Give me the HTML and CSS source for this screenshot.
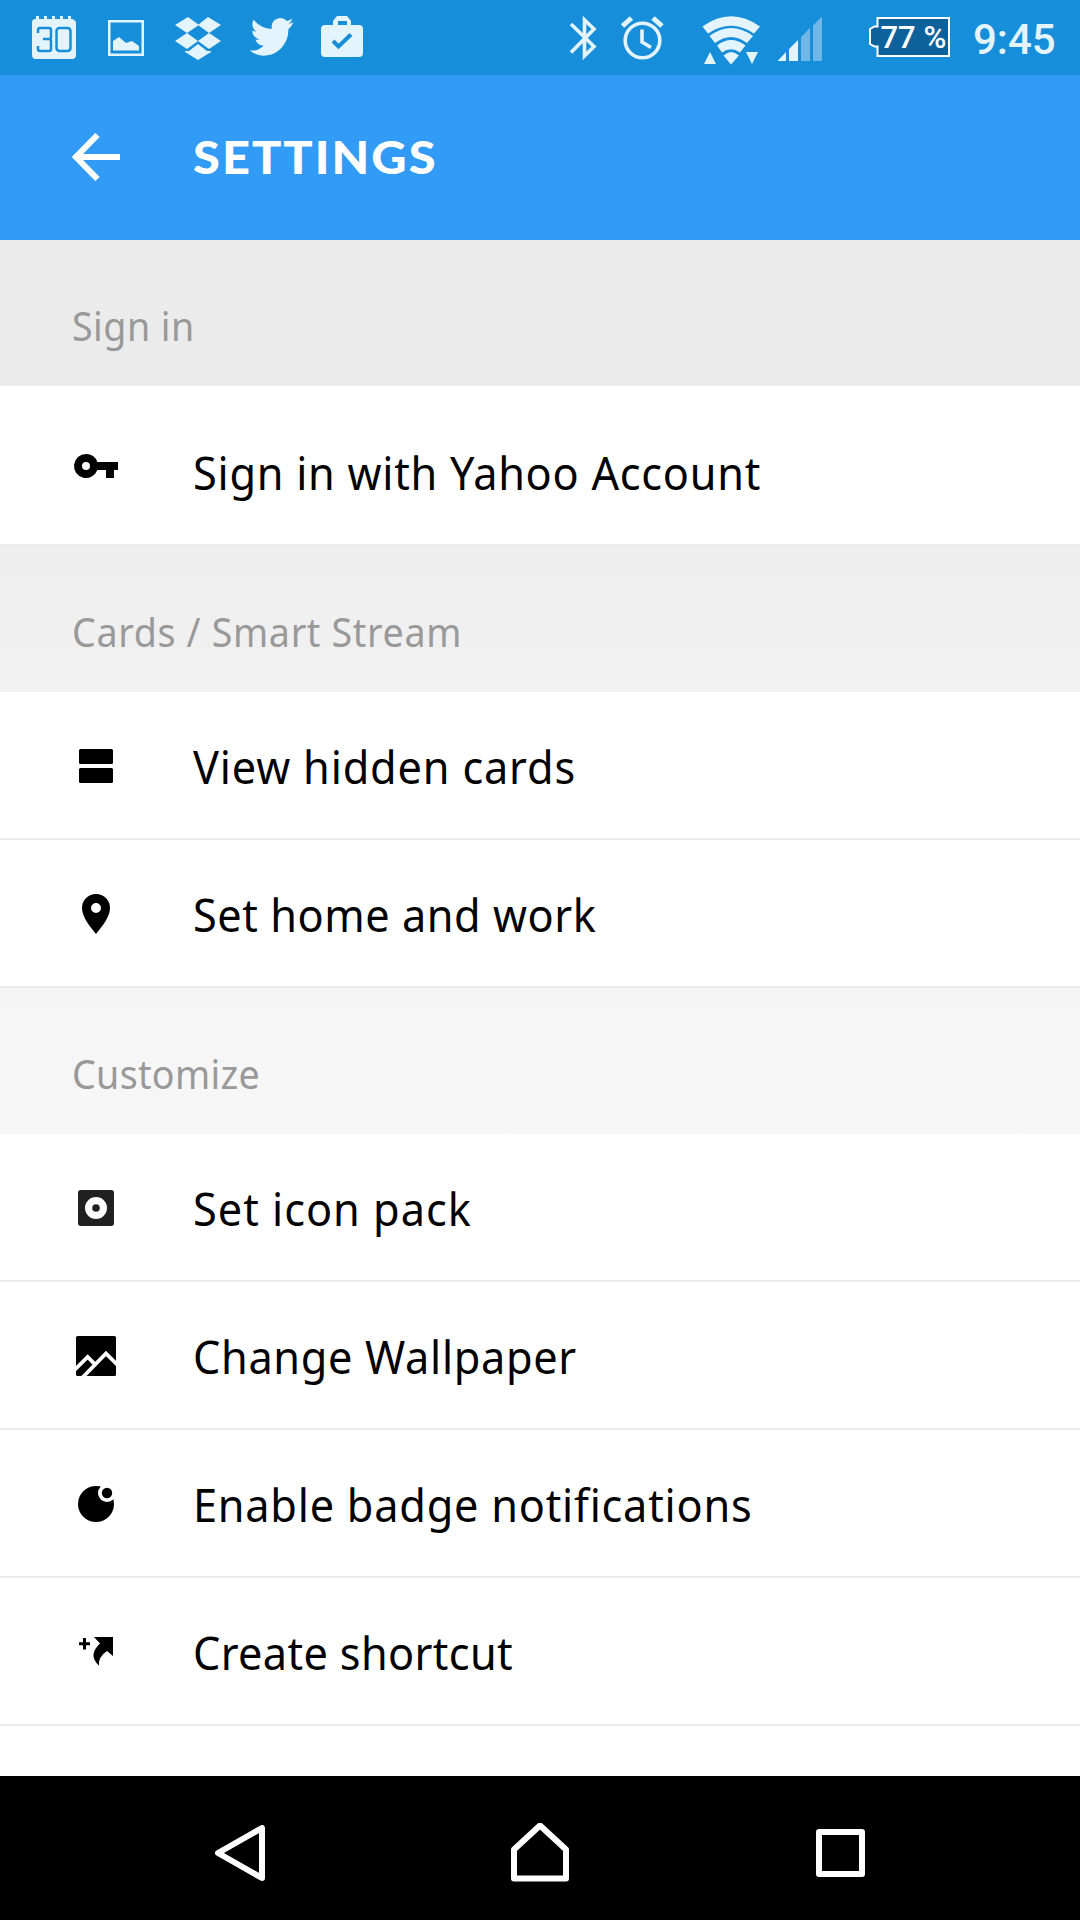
FILE: index.html
```html
<!DOCTYPE html>
<html lang="en">
<head>
<meta charset="utf-8">
<title>Settings</title>
<link rel="stylesheet" href="styles.css">
</head>
<body>
<div class="phone">
  <div class="status">
    <svg class="status-icons" width="400" height="75" viewBox="0 0 400 75">
      <g class="soft">
        <path d="M35 19h1v-3h3v3h5v-3h3v3h5v-3h3v3h5v-3h3v3h5v-3h3v3h1q4 1 4 4v32q0 4-4 4H36q-4 0-4-4V23q0-4 3-4z"/>
        <path d="M108 20h36v36h-36zM110.500 22.500v31h31v-31z" fill-rule="evenodd"/>
        <path d="M113 50.500V41l6-4 7 6 6-2 7 5v4.500z"/>
        <path d="M188 17l11 8-12 8-12-8zM208 17l13 8-12 8-11-8zM187 33l11 8-11 8-12-8zM209 33l12 8-12 8-11-8zM198 44l9 7h4v1l-13 8-13-8v-1h4z"/>
        <path d="M293.500 22.300a17.500 17.500 0 0 1-5 1.400 8.800 8.800 0 0 0 3.900-4.900 17.500 17.500 0 0 1-5.600 2.200 8.800 8.800 0 0 0-15.200 6c0 .7.100 1.400.2 2a25 25 0 0 1-18.200-9.200 9 9 0 0 0 2.700 11.900 8.800 8.800 0 0 1-4-1.100v.1a8.800 8.800 0 0 0 7.100 8.700 8.800 8.800 0 0 1-4 .2 8.800 8.800 0 0 0 8.300 6.100 17.700 17.700 0 0 1-14 4.700 25 25 0 0 0 13.600 5.300c16.200 0 25-13.500 25-25.200v-1.100a18 18 0 0 0 5.200-7.100z"/>
        <path d="M325 25h8v-4l4-5h10l4 5v4h8q4 0 4 4v24q0 4-4 4h-34q-4 0-4-4V29q0-4 4-4zM338 21v4h9v-4z" fill-rule="evenodd"/>
      </g>
      <g class="calendar-digits">
        <path d="M38 33v-3q0-2 2-2h9q2 0 2 2v7q0 2-2 2h-6 6q2 0 2 2v8q0 2-2 2h-9q-2 0-2-2v-3"/>
        <rect x="56.500" y="28" width="14" height="23" rx="3"/>
      </g>
      <path class="bag-check" d="M333 41l5.500 5.500L351 34.500"/>
    </svg>
    <div class="status-right">
      <svg width="285" height="75" viewBox="560 0 285 75">
        <g class="line">
          <path d="M571 24L594 46.500 584.500 56V20L594 29 571 52.500"/>
          <circle cx="642.500" cy="40.500" r="17.300"/>
          <path d="M642 29.500V42l9 5.500"/>
          <path class="bell" d="M622.500 26l9-8M653 18l9 8"/>
        </g>
        <g class="soft">
          <path d="M702.500 26.500Q731 6 760 26.500L754 33.500Q731 18 708 33.500zM709.500 36Q731 20 753 36L747 43Q731 31 715 43zM717 45.500Q731 34.500 745.500 45.500L740 52.500Q731 46 722 52.500zM723.500 55.500Q731 48.500 739 55.500L731 64.500z"/>
          <path d="M704 64l6-12 6 12zM746 52h12l-6 12zM777.500 61l8.500-9v9zM789 49l9-9V61h-9z"/>
          <path class="dim" d="M801 37l9-9v33h-9zM813 25.500l9-9V61h-9z"/>
        </g>
      </svg>
      <div class="battery">
        <svg width="82" height="42" viewBox="0 0 82 42"><path d="M8.500 1h71.500v38H8.500V29.500h-3L1 27V12l4.500-2.500h3z"/></svg>
        <span>77 %</span>
      </div>
      <span class="clock">9:45</span>
    </div>
  </div>

  <header class="bar">
    <svg width="48" height="48" viewBox="0 0 48 48"><path d="M48 24H4M25.500 2L4 24l21.500 22"/></svg>
    <h1>SETTINGS</h1>
  </header>

  <main>
    <h2 class="tone-1"><span class="label sign">Sign in</span></h2>
    <div class="row tall">
      <svg viewBox="0 0 48 48"><path d="M14 6a12 12 0 0 1 11.300 8H46v8h-4v8h-8v-8h-8.700A12 12 0 1 1 14 6zm0 8a4 4 0 1 0 0 8 4 4 0 0 0 0-8z" fill-rule="evenodd"/></svg>
      <span class="label account">Sign in with Yahoo Account</span>
    </div>
    <h2 class="tone-2"><span class="label stream">Cards / Smart Stream</span></h2>
    <div class="row">
      <svg viewBox="0 0 48 48"><rect x="7" y="7" width="34" height="15" rx="1.500"/><rect x="7" y="26" width="34" height="15" rx="1.500"/></svg>
      <span class="label hidden">View hidden cards</span>
    </div>
    <div class="row">
      <svg viewBox="0 0 48 48"><path d="M24 4a14 14 0 0 1 14 14c0 9.500-8.500 19-14 26-5.500-7-14-16.500-14-26A14 14 0 0 1 24 4zm0 9a5 5 0 1 0 0 10 5 5 0 0 0 0-10z" fill-rule="evenodd"/></svg>
      <span class="label places">Set home and work</span>
    </div>
    <h2 class="tone-3"><span class="label customize">Customize</span></h2>
    <div class="row">
      <svg class="disc" viewBox="0 0 48 48"><path d="M9 6h30q3 0 3 3v30q0 3-3 3H9q-3 0-3-3V9q0-3 3-3zm15 7a11 11 0 1 0 0 22 11 11 0 0 0 0-22zm0 7.200a3.800 3.800 0 1 1 0 7.600 3.800 3.800 0 0 1 0-7.600z" fill-rule="evenodd"/></svg>
      <span class="label pack">Set icon pack</span>
    </div>
    <div class="row">
      <svg viewBox="0 0 48 48"><rect x="4" y="4" width="40" height="40" rx="1.500"/><path class="cut" d="M2 38.500L15.700 25l6.300 6.300M10 46L34 21.500l12 12"/></svg>
      <span class="label wallpaper">Change Wallpaper</span>
    </div>
    <div class="row">
      <svg viewBox="0 0 48 48"><circle cx="24" cy="24" r="18"/><circle class="hole" cx="35" cy="13" r="9"/><circle cx="35" cy="13" r="5.200"/></svg>
      <span class="label badge">Enable badge notifications</span>
    </div>
    <div class="row">
      <svg viewBox="0 0 48 48"><path d="M7 14.200h4V10h3v4.200h4v3h-4v4.300h-3v-4.300H7zM22 9h19v19l-6-5q-9 6-8 14.700Q15.500 27 28 15.500z"/></svg>
      <span class="label shortcut">Create shortcut</span>
    </div>
  </main>

  <nav>
    <svg width="52" height="56" viewBox="0 0 52 56"><path d="M48 3v50L4 28z"/></svg>
    <svg width="60" height="60" viewBox="0 1.500 60 60"><path d="M30 4l26 24v29H4V28z"/></svg>
    <svg class="recent" width="50" height="48" viewBox="0 0 50 48"><rect x="3" y="3" width="43" height="42"/></svg>
  </nav>
</div>
</body>
</html>
```
FILE: styles.css
```css
* { box-sizing: border-box; }
body { margin: 0; font-family: "Noto Sans", sans-serif; }
.phone { width: 1080px; height: 1920px; display: flex; flex-direction: column; background: #fff; overflow: hidden; }
svg { display: block; flex: none; }

.status { height: 75px; background: #168eda; display: flex; justify-content: space-between; flex: none; font-family: Roboto, sans-serif; }
.soft { fill: #e4f4fc; }
.dim { fill: #6fb7e9; }
.calendar-digits { fill: none; stroke: #168eda; stroke-width: 2.5; }
.bag-check { fill: none; stroke: #168eda; stroke-width: 4; }
.line { fill: none; stroke: #e4f4fc; stroke-width: 3.6; }
.bell { stroke-width: 5; }
.status-right { display: flex; width: 520px; }
.battery { position: relative; width: 82px; height: 42px; margin: 17px 0 0 24px; }
.battery path { fill: #0e629b; stroke: #fff; stroke-width: 2; }
.battery span { position: absolute; left: 11.5px; top: 0; line-height: 41px; font-size: 31px; font-weight: 500; color: #fff; white-space: nowrap; }
.clock { margin-left: 22px; line-height: 79px; font-size: 42px; font-weight: 500; color: #e4f4fc; }

.bar { height: 165px; background: #319bf5; display: flex; align-items: center; padding: 0 72px 1px; gap: 73px; flex: none; }
.bar path { fill: none; stroke: #fff; stroke-width: 6; }
h1 { margin: 0; font: 900 46px/60px Lato, sans-serif; letter-spacing: 1.9px; color: #fff; transform: scaleX(1.06); transform-origin: left; }

h2 { margin: 0; height: 146px; padding: 27px 72px 0; line-height: 118px; font-size: 40px; font-weight: 400; color: #999; white-space: nowrap; }
.tone-1 { background: #ebebeb; }
.tone-2 { background: linear-gradient(#eee, #f1f1f1); }
.tone-3 { background: linear-gradient(#f5f5f5, #f7f7f7); }
.row { height: 148px; border-bottom: 2px solid #ebebeb; display: flex; align-items: center; padding: 2px 72px 0; gap: 73px; font-size: 46px; line-height: 60px; color: #000; white-space: nowrap; }
.row svg { width: 48px; height: 48px; }
.tall { height: 160px; padding-top: 14px; }

/* Slightly condensed lettering with open tracking */
.label { display: inline-block; transform: scaleX(.94); transform-origin: left; }
.sign { letter-spacing: .5px; }
.account { letter-spacing: .8px; }
.stream { letter-spacing: .72px; }
.hidden { letter-spacing: .9px; }
.places { letter-spacing: .6px; }
.customize { letter-spacing: .34px; }
.pack { letter-spacing: 1.07px; }
.wallpaper { letter-spacing: .73px; }
.badge { letter-spacing: .83px; }
.shortcut { letter-spacing: .4px; }

.disc { fill: #202020; }
.cut { fill: none; stroke: #fff; stroke-width: 3.8; }
.hole { fill: #fff; }
main { flex: 1; }

nav { height: 144px; background: #000; display: flex; align-items: center; justify-content: center; gap: 244px; padding-top: 10px; flex: none; }
nav path, nav rect { fill: none; stroke: #fff; stroke-width: 6; stroke-linejoin: round; }
.recent { margin-left: 2px; }
```
